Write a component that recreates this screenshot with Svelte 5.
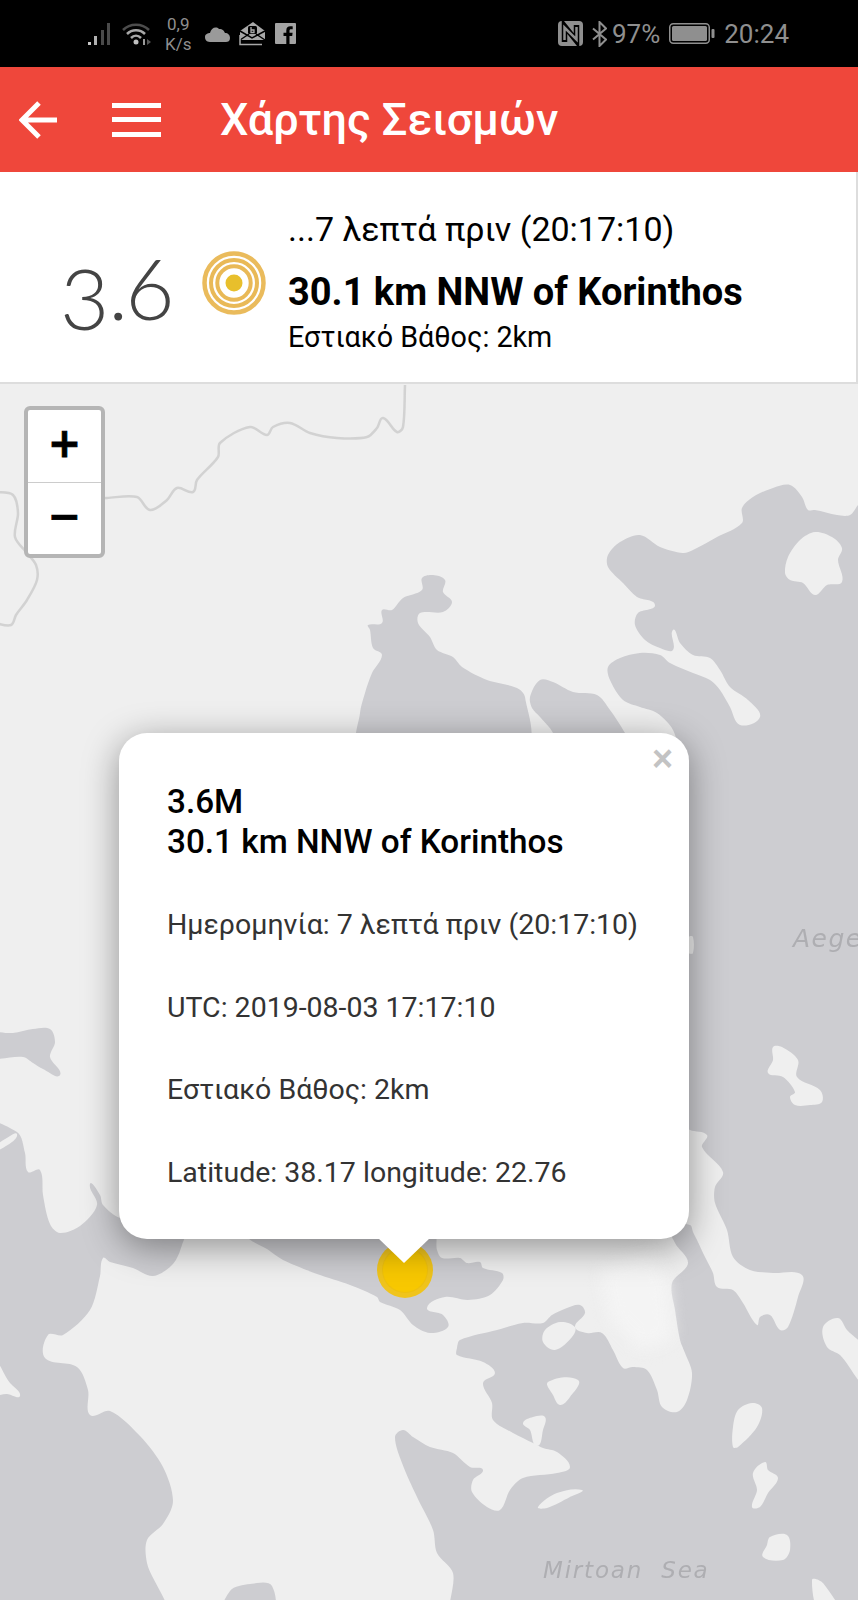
<script>
  function smooth(str) {
    return str.split("M").filter(Boolean).map((sub) => {
      const closed = sub.includes("Z");
      const p = sub.replace("Z", "").trim().split(/\s+/).map((s) => s.split(",").map(Number));
      const n = p.length;
      const at = (i) => (closed ? p[(i + n) % n] : p[Math.max(0, Math.min(n - 1, i))]);
      const unit = (a, b) => {
        const dx = b[0] - a[0], dy = b[1] - a[1];
        const l = Math.hypot(dx, dy) || 1;
        return [dx / l, dy / l];
      };
      let d = `M${p[0][0]},${p[0][1]}`;
      const last = closed ? n : n - 1;
      for (let i = 0; i < last; i++) {
        const a = at(i), b = at(i + 1);
        const h = Math.hypot(b[0] - a[0], b[1] - a[1]) * 0.3;
        const t1 = unit(at(i - 1), b), t2 = unit(a, at(i + 2));
        d += `C${(a[0] + t1[0] * h).toFixed(1)},${(a[1] + t1[1] * h).toFixed(1)} ${(b[0] - t2[0] * h).toFixed(1)},${(b[1] - t2[1] * h).toFixed(1)} ${b[0]},${b[1]}`;
      }
      return d + (closed ? "Z" : "");
    }).join(" ");
  }

  const seas = [
    "M858,505 850,515 837,515 815,510 808,510 802,497 790,485 773,488 753,497 742,508 742,523 717,537 693,550 683,553 660,547 640,535 620,542 608,555 608,567 623,583 637,597 655,605 638,613 635,625 645,640 660,648 673,650 673,630 680,643 693,655 710,658 720,670 730,687 748,700 760,717 740,725 730,707 720,690 710,680 693,673 670,663 660,655 640,653 620,658 608,667 610,680 623,700 640,707 657,713 673,730 680,760 685,1125 690,1130 707,1135 702,1147 723,1172 715,1187 715,1203 727,1230 733,1257 750,1270 773,1273 802,1275 798,1297 788,1327 780,1330 770,1315 760,1317 757,1325 743,1303 733,1290 717,1287 713,1273 705,1257 697,1240 693,1232 690,1225 670,1225 675,1243 688,1263 672,1283 675,1310 680,1340 685,1353 692,1373 687,1400 677,1412 662,1407 657,1390 647,1370 633,1367 623,1368 613,1350 602,1333 587,1333 575,1327 585,1313 580,1305 567,1308 552,1315 543,1323 523,1323 497,1330 460,1340 457,1348 457,1355 483,1362 495,1373 483,1383 492,1403 493,1420 513,1433 533,1443 543,1448 557,1452 570,1467 557,1473 523,1478 510,1490 500,1510 487,1507 472,1492 473,1480 483,1470 470,1467 453,1453 430,1447 413,1437 403,1430 395,1437 402,1463 417,1497 433,1530 437,1553 453,1573 455,1620 880,1620 880,480Z",
    "M360,745 360,713 365,693 372,673 382,655 373,648 370,630 368,625 382,623 382,610 392,610 403,598 422,590 422,578 433,575 445,580 443,592 452,602 443,612 420,613 418,623 430,637 437,650 453,657 462,667 487,680 517,688 525,697 525,745Z",
    "M532,708 530,697 540,680 553,682 573,692 597,695 610,710 625,733 630,745 553,745 553,733 540,717Z",
    "M248,1230 248,1238 267,1249 283,1260 317,1274 350,1285 377,1297 380,1302 400,1310 413,1325 430,1333 448,1327 443,1315 427,1308 445,1297 468,1300 490,1295 503,1280 502,1273 483,1268 480,1262 467,1263 460,1258 442,1258 437,1250 433,1230Z",
    "M-20,1124 17,1132 25,1153 28,1172 40,1170 43,1195 50,1224 60,1233 80,1226 97,1205 90,1184 100,1195 103,1205 120,1218 184,1230 182,1245 173,1264 153,1276 133,1268 110,1262 103,1258 100,1276 90,1310 63,1335 48,1335 45,1358 77,1367 88,1390 90,1415 110,1411 140,1436 163,1467 173,1501 163,1524 147,1540 147,1563 163,1620 -20,1620Z",
    "M-20,1034 13,1033 33,1029 50,1029 55,1042 50,1057 60,1075 43,1069 33,1063 23,1057 -20,1057Z",
    "M223,1620 230,1591 250,1584 272,1586 270,1620Z"
  ].map(smooth);
  const islands = [
    "M785,573 788,557 800,540 815,532 832,537 842,548 838,560 842,582 827,585 815,595 803,583 790,580Z",
    "M773,1047 782,1047 798,1060 797,1077 820,1090 822,1102 810,1105 795,1105 790,1097 795,1092 783,1077 768,1073 773,1060Z",
    "M823,1327 838,1318 847,1330 875,1358 875,1392 840,1355 827,1347Z",
    "M733,1427 738,1410 752,1403 762,1408 757,1427 738,1447 733,1447Z",
    "M765,1462 768,1470 778,1478 768,1493 760,1507 752,1507 757,1490 753,1473Z",
    "M770,1537 787,1535 790,1550 783,1560 763,1557 767,1545Z",
    "M812,1580 823,1583 842,1620 822,1620Z",
    "M538,1507 557,1493 582,1490 570,1497 547,1508Z",
    "M548,1382 578,1380 570,1397 560,1405 553,1395Z",
    "M523,1423 533,1417 545,1417 543,1430 537,1446 530,1430Z",
    "M543,1342 555,1350 572,1337 575,1327 560,1322 545,1330Z",
    "M-15,1354 10,1383 20,1396 7,1394 -15,1394Z",
    "M-10,1150 10,1136 17,1134 12,1142 -10,1154Z",
    "M689,937 693,937 693,953 689,953Z"
  ].map(smooth);
  const border = smooth("M405,385 403,427 397,432 383,418 377,428 367,437 337,438 310,433 290,423 273,427 267,435 250,427 220,443 218,457 197,480 193,492 177,488 167,500 150,510 137,497 107,498 60,500 M-5,492 13,495 18,513 15,537 27,553 36,565 37,580 27,600 16,615 11,625 -5,623");
</script>

<div class="page">
  <div class="status">
    <div class="status-left">
      <svg class="ic-signal" width="28" height="26" viewBox="0 0 28 26">
        <rect x="1" y="21" width="3" height="3" fill="#c8c8c8"/>
        <rect x="7" y="15" width="3" height="9" fill="#b0b0b0"/>
        <rect x="14" y="9" width="3" height="15" fill="#4a4a4a"/>
        <rect x="20" y="2" width="3" height="22" fill="#4a4a4a"/>
      </svg>
      <svg class="ic-wifi" width="30" height="24" viewBox="0 0 30 24" fill="none">
        <path d="M1 8C8 1 20 1 27 8" stroke="#4c4c4c" stroke-width="2.5"/>
        <path d="M5 12C10 7 18 7 23 12" stroke="#a8a8a8" stroke-width="2.5"/>
        <path d="M9 16C12 13 16 13 19 16" stroke="#a8a8a8" stroke-width="2.5"/>
        <circle cx="14" cy="20" r="2.5" fill="#c0c0c0"/>
        <rect x="21" y="17" width="2" height="6" fill="#999"/>
        <path d="M25 17l4 3-4 3z" fill="#555"/>
      </svg>
      <div class="speed"><span>0,9</span><span>K/s</span></div>
      <svg class="ic-cloud" width="25" height="18" viewBox="0 0 25 18">
        <path d="M5 17C1 17 0 14 0 12C0 9 3 8 5 8C6 3 11 1 14 4C18 4 19 6 20 8C23 8 25 10 25 13C25 16 23 17 21 17Z" fill="#9a9a9a"/>
      </svg>
      <svg class="ic-mail" width="27" height="25" viewBox="0 0 27 25" fill="none">
        <path d="M1 10 14 1 26 10V19H1Z" fill="#a8a8a8"/>
        <path d="M1 10 13 17 26 10M1 19 10 13M26 19 17 13" stroke="#000" stroke-width="1.5"/>
        <rect x="9" y="5" width="9" height="8" rx="1.5" fill="#000"/>
        <path d="M12 6v5.5h3v-2.500h-3" stroke="#a8a8a8" stroke-width="1.300"/>
        <path d="M1 14v9.500h22" stroke="#a8a8a8" stroke-width="1.500"/>
      </svg>
      <svg class="ic-fb" width="21" height="21" viewBox="0 0 21 21">
        <rect width="21" height="21" rx="1" fill="#a3a3a3"/>
        <path d="M14.500 21V13h2.700l.4-3.200h-3.100V7.800c0-.9.300-1.500 1.600-1.500h1.600V3.400c-.3 0-1.300-.1-2.400-.1-2.400 0-4 1.400-4 4.100v2.400H8.500V13h2.800v8z" fill="#000"/>
      </svg>
    </div>
    <div class="status-right">
      <svg class="ic-nfc" width="25" height="25" viewBox="0 0 25 25">
        <rect width="25" height="25" rx="4" fill="#8f8f8f"/>
        <path d="M6.500 21V5L18.500 20V4" fill="none" stroke="#000" stroke-width="5.500"/>
        <path d="M6.500 19V6.500L18.500 18.500V6" fill="none" stroke="#8f8f8f" stroke-width="2.500"/>
      </svg>
      <svg class="ic-bt" width="15" height="26" viewBox="0 0 15 26" fill="none">
        <path d="M1 7.500 14 18.500 7.500 25V1L14 7.500 1 18.500" stroke="#8f8f8f" stroke-width="2"/>
      </svg>
      <span class="pct">97%</span>
      <svg class="ic-batt" width="46" height="21" viewBox="0 0 46 21">
        <rect x=".75" y=".75" width="39.500" height="19.500" rx="3.500" fill="none" stroke="#8f8f8f" stroke-width="1.500"/>
        <rect x="3" y="3" width="35" height="15" rx="1.500" fill="#8f8f8f"/>
        <rect x="42.500" y="6" width="3" height="9" rx="1" fill="#8f8f8f"/>
      </svg>
      <span class="time">20:24</span>
    </div>
  </div>

  <header class="bar">
    <svg class="back" width="40" height="38" viewBox="0 0 40 38" fill="none">
      <path d="M38 19H4M20 2 3 19 20 36" stroke="#fff" stroke-width="5"/>
    </svg>
    <svg class="burger" width="49" height="34" viewBox="0 0 49 34" fill="#fff">
      <rect width="49" height="5"/><rect y="14" width="49" height="5"/><rect y="29" width="49" height="5"/>
    </svg>
    <h1>Χάρτης Σεισμών</h1>
  </header>

  <section class="card">
    <div class="mag"><span class="three">3</span><span class="dot">.</span><span>6</span></div>
    <svg class="rings" width="66" height="66" viewBox="0 0 66 66" fill="none">
      <circle cx="33" cy="33" r="29.500" stroke="#eabb5c" stroke-width="4.500"/>
      <circle cx="33" cy="33" r="23" stroke="#e9b957" stroke-width="4"/>
      <circle cx="33" cy="33" r="16.700" stroke="#e9b957" stroke-width="4"/>
      <circle cx="33" cy="33" r="8.500" fill="#e8bf2c"/>
    </svg>
    <div class="info">
      <div class="when">...7 λεπτά πριν (20:17:10)</div>
      <div class="where">30.1 km NNW of Korinthos</div>
      <div class="depth">Εστιακό Βάθος: 2km</div>
    </div>
  </section>

  <main class="map">
    <svg class="geo" width="858" height="1216" viewBox="0 384 858 1216">
      {#each seas as d}<path {d} fill="#cdcdd1"/>{/each}
      {#each islands as d}<path {d} fill="#efefef"/>{/each}
      <path class="haze" d="M600,1270 650,1250 668,1283 672,1340 640,1350 610,1320Z" fill="#f4f4f4"/>
      <path d={border} fill="none" stroke="#cacaca" stroke-width="2.500" stroke-linejoin="round" opacity=".8"/>
      <text class="label" x="793" y="947">Aege</text>
      <text class="label mirtoan" x="543" y="1578">Mirtoan  Sea</text>
    </svg>

    <div class="zoom">
      <div class="zbtn">+</div>
      <div class="zbtn">−</div>
    </div>

    <div class="marker"><div class="marker-in"></div></div>

    <div class="popup">
      <span class="close">×</span>
      <div class="head">3.6M<br>30.1 km NNW of Korinthos</div>
      <p>Ημερομηνία: 7 λεπτά πριν (20:17:10)</p>
      <p>UTC: 2019-08-03 17:17:10</p>
      <p>Εστιακό Βάθος: 2km</p>
      <p>Latitude: 38.17 longitude: 22.76</p>
      <div class="tip"></div>
    </div>
  </main>
</div>

<style>
  :global(body) { margin: 0; background: #efefef; }
  .page { width: 858px; height: 1600px; overflow: hidden; font-family: Roboto, "Noto Sans", sans-serif; display: flex; flex-direction: column; }

  .status { height: 67px; flex: none; background: #000; color: #8f8f8f; display: flex; justify-content: space-between; align-items: center; padding: 0 69px 0 87px; box-sizing: border-box; }
  .status-left, .status-right { display: flex; align-items: center; }
  .ic-wifi { margin-left: 7px; }
  .speed { display: flex; flex-direction: column; align-items: center; font-size: 17px; line-height: 20px; margin-left: 13px; }
  .ic-cloud { margin-left: 14px; }
  .ic-mail { margin-left: 9px; }
  .ic-fb { margin-left: 9px; }
  .ic-bt { margin-left: 9px; }
  .pct { font-size: 26px; margin-left: 5px; }
  .ic-batt { margin-left: 9px; }
  .time { font-size: 26px; margin-left: 9px; }

  .bar { height: 105px; flex: none; background: #ef473b; display: flex; align-items: center; color: #fff; padding-left: 19px; box-sizing: border-box; }
  .burger { margin-left: 53px; }
  .bar h1 { margin: 0 0 0 59px; font-size: 45px; font-weight: 500; line-height: 105px; }

  .card { height: 212px; flex: none; box-sizing: border-box; background: #fff; border-right: 2px solid #ddd; border-bottom: 2px solid #ddd; display: flex; align-items: center; padding-left: 60px; color: #000; }
  .mag { width: 141px; flex: none; font-family: Lato, sans-serif; font-weight: 300; font-size: 85px; line-height: 82px; color: #444; margin-top: 30px; white-space: nowrap; }
  .three { vertical-align: -10px; }
  .dot { margin: 0 -3px 0 -1px; }
  .rings { flex: none; margin: 11px 0 0 0; }
  .info { margin-left: 21px; display: flex; flex-direction: column; margin-top: 8px; }
  .when { font-size: 34px; line-height: 40px; }
  .where { font-size: 38px; line-height: 42px; font-weight: 700; margin-top: 22px; }
  .depth { font-size: 28.700px; line-height: 34px; margin-top: 7px; }

  .map { position: relative; flex: 1; background: #efefef; overflow: hidden; }
  .geo { position: absolute; inset: 0; filter: blur(.7px); }
  .haze { filter: blur(8px); }
  .label { font-family: "DejaVu Sans", sans-serif; font-style: italic; font-size: 25px; letter-spacing: 1.500px; fill: #aeaeb2; white-space: pre; }
  .mirtoan { font-size: 23px; letter-spacing: 1.800px; }

  .zoom { position: absolute; left: 24px; top: 22px; width: 81px; height: 152px; box-sizing: border-box; border: 4px solid #b5b5b5; border-radius: 6px; background: #fff; display: flex; flex-direction: column; }
  .zbtn { flex: 1; display: flex; align-items: center; justify-content: center; font-family: "DejaVu Sans", sans-serif; font-weight: 700; font-size: 40px; line-height: 64px; padding-bottom: 5px; color: #000; -webkit-text-stroke: .8px #000; box-sizing: border-box; }
  .zbtn:first-child { border-bottom: 1.500px solid #ccc; }

  .marker { position: absolute; left: 377px; top: 858px; width: 56px; height: 56px; border-radius: 50%; background: #f0c41c; display: flex; align-items: center; justify-content: center; }
  .marker-in { width: 44px; height: 44px; border-radius: 50%; background: #f8c800; box-shadow: 0 0 0 1px #eec00e; }

  .popup { position: absolute; left: 119px; top: 349px; width: 570px; height: 506px; box-sizing: border-box; padding: 49px 48px 0; background: #fff; border-radius: 28px; box-shadow: 0 8px 36px rgba(0,0,0,.4); color: #333; }
  .close { position: absolute; right: 16px; top: 6px; font-family: "Liberation Sans", sans-serif; font-weight: 700; font-size: 36px; line-height: 40px; color: #c3c3c3; }
  .head { font-size: 33.300px; line-height: 40px; color: #000; font-weight: 500; }
  .popup p { margin: 41px 0 0; font-size: 28.500px; line-height: 41.500px; }
  .head + p { margin-top: 42px; }
  .tip { position: absolute; left: 259px; bottom: -24px; width: 0; height: 0; border-left: 26px solid transparent; border-right: 26px solid transparent; border-top: 25px solid #fff; }
</style>
